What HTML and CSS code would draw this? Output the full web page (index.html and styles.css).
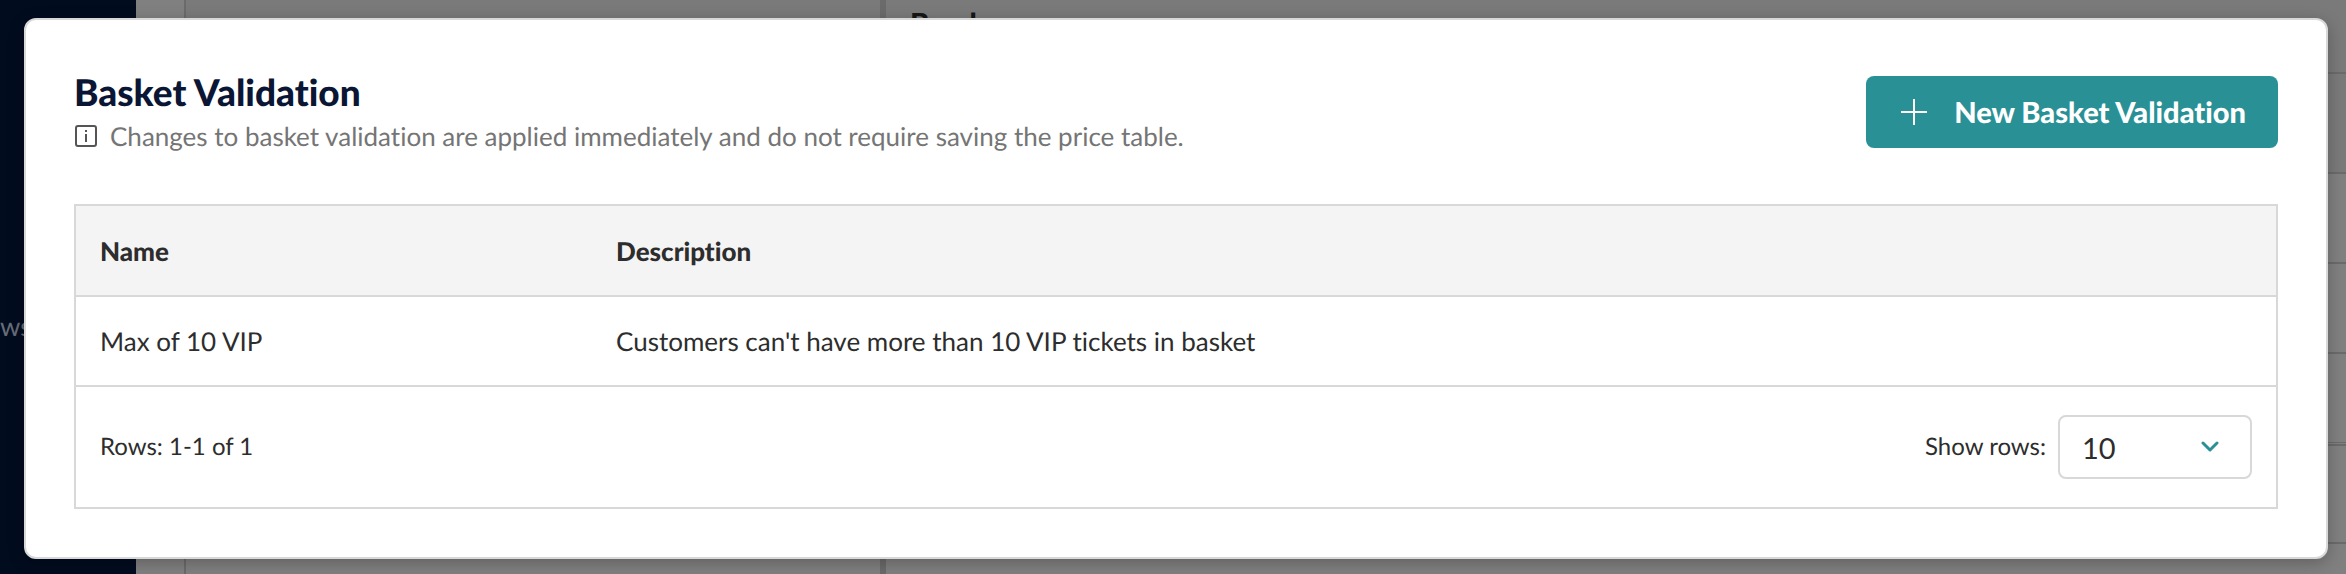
FILE: index.html
```html
<!DOCTYPE html>
<html lang="en">
<head>
    <meta charset="UTF-8">
    <title>Basket Validation</title>
    <link rel="stylesheet" href="styles.css">
</head>
<body>
    <!-- page behind the modal -->
    <div class="page">
        <div class="sidebar">
            <span class="sidebar-item">ws</span>
        </div>
        <div class="main">
            <div class="panel-left"></div>
            <div class="panel-right">
                <div class="panel-title">Band</div>
                <div class="line line-head"></div>
                <div class="line"></div>
                <div class="line"></div>
                <div class="line"></div>
                <div class="line line-end"></div>
                <div class="line line-foot"></div>
            </div>
        </div>
    </div>

    <div class="overlay">
        <div class="modal" role="dialog" aria-labelledby="modal_title">
            <div class="modal-header">
                <div>
                    <h1 id="modal_title">Basket Validation</h1>
                    <p class="hint">
                        <svg width="24" height="24" viewBox="0 0 24 24" fill="none" stroke="#555" stroke-width="2">
                            <rect x="2" y="2" width="20" height="20" rx="2"/>
                            <path d="M12 10v8M12 6v2"/>
                        </svg>
                        Changes to basket validation are applied immediately and do not require saving the price table.
                    </p>
                </div>
                <button class="new-btn" type="button">
                    <svg width="28" height="28" viewBox="0 0 28 28" stroke="#fff" stroke-width="2">
                        <path d="M14 1v26M1 14h26"/>
                    </svg>
                    New Basket Validation
                </button>
            </div>

            <div class="table-box">
                <table>
                    <thead>
                        <tr>
                            <th class="col-name">Name</th>
                            <th>Description</th>
                        </tr>
                    </thead>
                    <tbody>
                        <tr>
                            <td>Max of 10 VIP</td>
                            <td>Customers can't have more than 10 VIP tickets in basket</td>
                        </tr>
                    </tbody>
                </table>
                <div class="table-footer">
                    <span>Rows: 1-1 of 1</span>
                    <div class="show-rows">
                        <label for="rows">Show rows:</label>
                        <div class="select">
                            <select id="rows">
                                <option>10</option>
                            </select>
                            <svg width="20" height="12" viewBox="0 0 20 12" fill="none" stroke="#299196" stroke-width="3" stroke-linecap="round" stroke-linejoin="round">
                                <path d="M3 2l7 7 7-7"/>
                            </svg>
                        </div>
                    </div>
                </div>
            </div>
        </div>
    </div>
</body>
</html>
```
FILE: styles.css
```css
*{
    margin: 0;
    padding: 0;
    box-sizing: border-box;
}
body{
    font-family: Lato, "Liberation Sans", sans-serif;
    font-size: 26px;
    line-height: 32px;
    color: #2d2d2d;
    font-variant-ligatures: none;
    text-rendering: geometricPrecision;
}
.page{
    display: flex;
    height: 100vh;
    overflow: hidden;
    background: #808080;
}
.sidebar{
    width: 136px;
    padding-top: 310px;
    background: #020c1f;
}
.sidebar-item{
    color: #676d79;
}
.main{
    flex: 1;
    display: flex;
    margin-left: 48px;
    border-left: 2px solid #6b6b6b;
    background: linear-gradient(#7a7a7a 172px, #808080 172px);
}
.panel-left{
    width: 700px;
    border-right: 6px solid #6b6b6b;
}
.panel-right{
    flex: 1;
}
.panel-title{
    height: 72px;
    padding: 8px 24px;
    font-size: 29px;
    font-weight: 900;
    color: #161616;
}
.line{
    height: 90px;
    border-top: 2px solid #6b6b6b;
}
.line-head{
    height: 100px;
}
.line-end{
    height: 2px;
    border-top-width: 1px;
}
.line-foot{
    height: 100px;
    border-bottom: 2px solid #6b6b6b;
}
.overlay{
    position: absolute;
    top: 0;
    left: 0;
    width: 100%;
    padding: 18px 18px 16px 24px;
}
.modal{
    padding: 56px 48px 48px;
    background: #fff;
    border: 2px solid #d8d8d8;
    border-radius: 12px;
    box-shadow: 0 4px 16px rgba(0, 0, 0, 0.25);
}
.modal-header{
    display: flex;
    justify-content: space-between;
    align-items: flex-start;
    margin-bottom: 52px;
}
h1{
    font-size: 37px;
    line-height: 32px;
    font-weight: 900;
    color: #0a1633;
}
.hint{
    display: flex;
    align-items: center;
    gap: 12px;
    margin-top: 12px;
    color: #757575;
}
.new-btn{
    display: flex;
    align-items: center;
    gap: 26px;
    height: 72px;
    padding: 0 32px 0 34px;
    font-family: inherit;
    font-size: 29px;
    font-weight: 900;
    color: #fff;
    background: #299196;
    border: none;
    border-radius: 8px;
    cursor: pointer;
    font-variant-ligatures: none;
    text-rendering: geometricPrecision;
}
.table-box{
    border: 2px solid #d8d8d8;
}
table{
    width: 100%;
    border-collapse: collapse;
    table-layout: fixed;
}
th, td{
    height: 90px;
    padding: 0 24px;
    text-align: left;
    border-bottom: 2px solid #d8d8d8;
}
th{
    font-weight: 900;
    background: #f4f4f4;
}
.col-name{
    width: 516px;
}
.table-footer{
    display: flex;
    align-items: center;
    justify-content: space-between;
    height: 120px;
    padding: 0 24px;
    font-size: 24px;
}
.show-rows{
    display: flex;
    align-items: center;
    gap: 12px;
}
.select{
    position: relative;
}
.select select{
    width: 194px;
    height: 64px;
    padding: 0 22px;
    appearance: none;
    font-family: inherit;
    font-size: 29px;
    color: #2d2d2d;
    background: #fff;
    border: 2px solid #d8d8d8;
    border-radius: 8px;
}
/* arrow over the select */
.select svg{
    position: absolute;
    top: 26px;
    right: 32px;
    pointer-events: none;
}
```
